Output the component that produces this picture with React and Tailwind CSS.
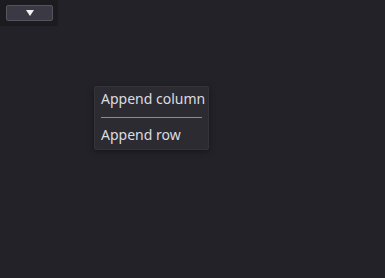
import React from 'react';

export default function App() {
  return (
    <div
      className="relative w-[385px] h-[278px] overflow-hidden bg-[#232228] text-[#dcdce0]"
      style={{ fontFamily: '"Noto Sans", "DejaVu Sans", sans-serif' }}
    >
      {/* toolbar */}
      <div className="w-[58px] h-[26px] bg-[#1c1b20] flex pl-[6px] pt-[5px]">
        <button className="w-[47px] h-[16px] rounded-[2px] bg-[#3b3944] border border-[#55535e] flex items-center justify-center">
          <svg width="8" height="6" viewBox="0 0 8 6">
            <path d="M0 0 H8 L4 6 Z" fill="#f2f2f4" />
          </svg>
        </button>
      </div>

      {/* popup menu */}
      <div className="absolute left-[94px] top-[86px] w-[115px] h-[64px] bg-[#2c2b31] border border-[#34333a] rounded-[2px] shadow-[0_2px_6px_rgba(0,0,0,0.35)] px-[6px] pt-[2px] flex flex-col">
        <div className="text-[14px] leading-[19px] whitespace-nowrap">Append column</div>
        <div className="h-px bg-[#8d8c94] mt-[9px]" />
        <div className="text-[14px] leading-[19px] whitespace-nowrap mt-[7px]">Append row</div>
      </div>
    </div>
  );
}
